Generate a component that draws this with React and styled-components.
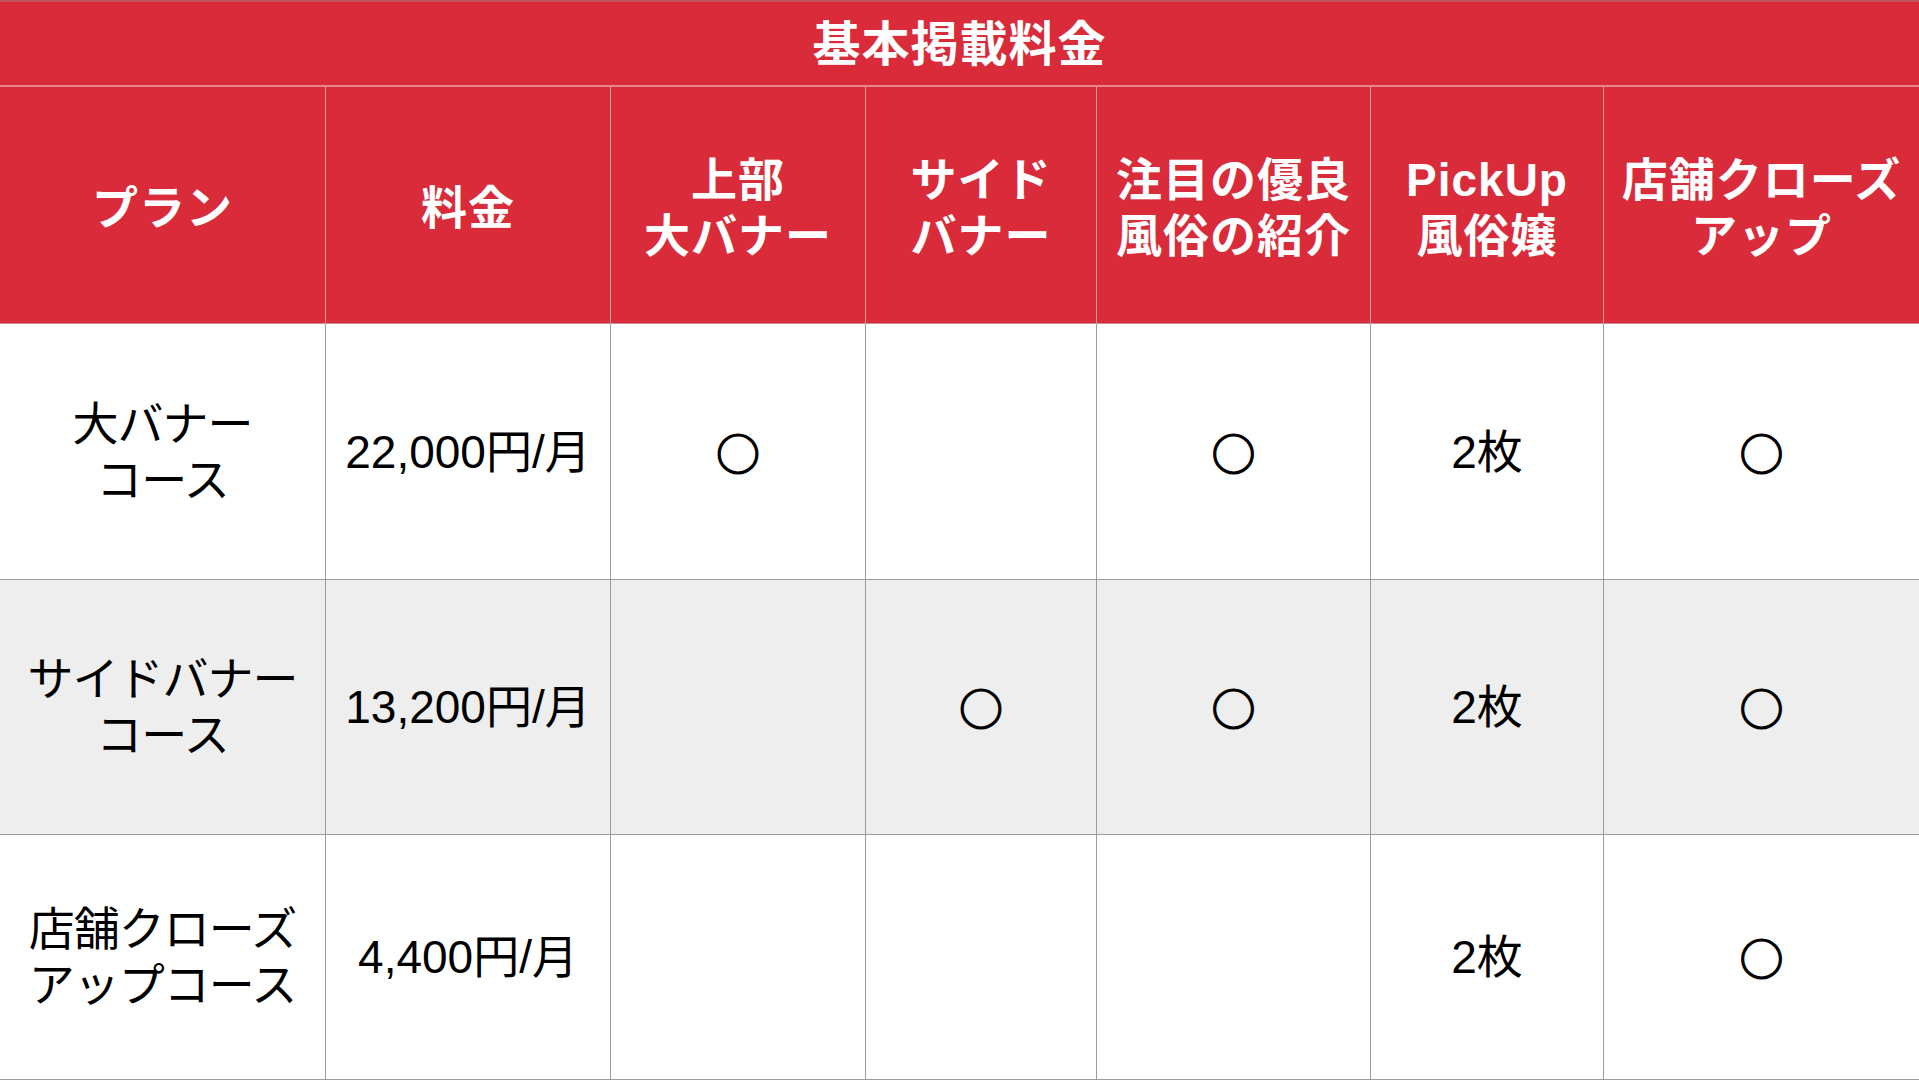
import React from 'react';
import styled, { createGlobalStyle } from 'styled-components';

const headers = [
  ['プラン'],
  ['料金'],
  ['上部', '大バナー'],
  ['サイド', 'バナー'],
  ['注目の優良', '風俗の紹介'],
  ['PickUp', '風俗嬢'],
  ['店舗クローズ', 'アップ'],
];

const plans = [
  { name: ['大バナー', 'コース'], cells: ['22,000円/月', '○', '', '○', '2枚', '○'] },
  { name: ['サイドバナー', 'コース'], cells: ['13,200円/月', '', '○', '○', '2枚', '○'] },
  { name: ['店舗クローズ', 'アップコース'], cells: ['4,400円/月', '', '', '', '2枚', '○'] },
];

const App = () => {
  return (
    <>
      <GlobalStyle />
      <Page>
        <TitleBar>基本掲載料金</TitleBar>
        <PriceGrid>
          {headers.map((lines, i) => (
            <HeadCell key={`h${i}`} last={i === headers.length - 1}>
              {lines.map((line) => (
                <Line key={line}>{line}</Line>
              ))}
            </HeadCell>
          ))}

          {plans.map((plan, r) => (
            <React.Fragment key={`r${r}`}>
              <BodyCell shaded={r % 2 === 1}>
                {plan.name.map((line) => (
                  <NameLine key={line}>{line}</NameLine>
                ))}
              </BodyCell>
              {plan.cells.map((value, c) => (
                <BodyCell
                  key={`c${r}-${c}`}
                  shaded={r % 2 === 1}
                  last={c === plan.cells.length - 1}
                >
                  {value === '○' ? <Mark>○</Mark> : value}
                </BodyCell>
              ))}
            </React.Fragment>
          ))}
        </PriceGrid>
      </Page>
    </>
  );
};

// Styled components
const GlobalStyle = createGlobalStyle`
  html, body {
    margin: 0;
    padding: 0;
    background: #ffffff;
    overflow: hidden;
  }
  body {
    font-family: "Liberation Sans", "Noto Sans CJK JP", sans-serif;
  }
`;

const Page = styled.div`
  display: flex;
  flex-direction: column;
  width: 100vw;
  height: 100vh;
`;

const TitleBar = styled.div`
  flex: 0 0 87px;
  box-sizing: border-box;
  display: flex;
  align-items: center;
  justify-content: center;
  padding-bottom: 7px;
  background-color: #d92b3a;
  border-top: 2px solid #c5545d;
  border-bottom: 2px solid #e8868e;
  color: #ffffff;
  font-family: "Noto Sans CJK JP", sans-serif;
  font-size: 48px;
  font-weight: 700;
  letter-spacing: 1px;
`;

const PriceGrid = styled.div`
  flex: 1;
  display: grid;
  grid-template-columns: 326px 285px 255px 231px 274px 233px 1fr;
  grid-template-rows: 237px 256px 255px 1fr;
`;

const Cell = styled.div`
  box-sizing: border-box;
  display: flex;
  flex-direction: column;
  align-items: center;
  justify-content: center;
  text-align: center;
  line-height: 56px;
  white-space: nowrap;
`;

const HeadCell = styled(Cell)`
  padding-top: 6px;
  background-color: #d92b3a;
  color: #ffffff;
  font-size: 46px;
  font-weight: 700;
  letter-spacing: 1px;
  border-right: ${(props) => (props.last ? 'none' : '1px solid #eb9aa0')};
  border-bottom: 1px solid #c98c90;
`;

const BodyCell = styled(Cell)`
  background-color: ${(props) => (props.shaded ? '#eeeeee' : '#ffffff')};
  color: #000000;
  font-size: 46px;
  border-right: ${(props) => (props.last ? 'none' : '1px solid #9c9c9c')};
  border-bottom: 1px solid #9c9c9c;
`;

const Line = styled.span`
  display: block;
`;

const NameLine = styled.span`
  display: block;
  letter-spacing: -1px;
`;

const Mark = styled.span`
  font-family: "Noto Sans CJK JP", sans-serif;
  font-size: 44px;
  font-weight: 700;
  -webkit-text-stroke: 1.2px #000000;
`;

export default App;
